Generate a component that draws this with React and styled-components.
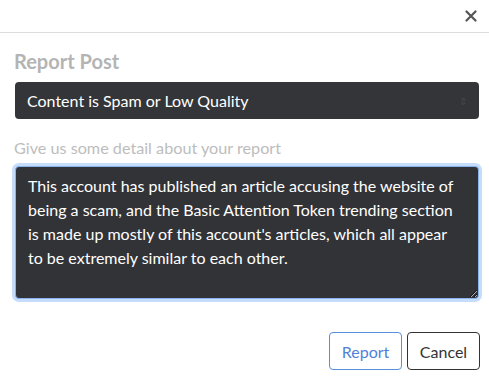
import React from "react";
import styled, { createGlobalStyle } from "styled-components";

const GlobalStyle = createGlobalStyle`
  html, body {
    margin: 0;
    padding: 0;
    background: #fff;
  }
  body {
    font-family: Lato, "Noto Sans", sans-serif;
  }
`;

const Modal = styled.div`
  width: 489px;
  height: 380px;
  background: #fff;
  display: flex;
  flex-direction: column;
`;

const Header = styled.div`
  height: 33px;
  border-bottom: 1px solid #dcdcdc;
  display: flex;
  justify-content: flex-end;
  align-items: center;
  padding-right: 10px;
  box-sizing: border-box;
`;

const CloseButton = styled.button`
  border: none;
  background: none;
  padding: 0;
  width: 16px;
  height: 16px;
  display: flex;
  align-items: center;
  justify-content: center;
  cursor: pointer;
`;

const Body = styled.div`
  padding: 15px 10px 0 14px;
  display: flex;
  flex-direction: column;
`;

const Title = styled.h4`
  margin: 0 0 8px;
  font-size: 20px;
  font-weight: 700;
  color: #b4b4b4;
  line-height: 26px;
`;

const Select = styled.div`
  height: 37px;
  margin-left: 1px;
  background: #343539;
  border-radius: 4px;
  display: flex;
  align-items: center;
  justify-content: space-between;
  padding: 0 12px;
  color: #fff;
  font-size: 16px;
`;

const Arrows = styled.span`
  color: #45464a;
  font-size: 10px;
`;

const Label = styled.label`
  display: block;
  margin: 19px 0 8px;
  font-size: 16.2px;
  color: #bdbdbd;
  line-height: 20px;
`;

const TextArea = styled.textarea`
  box-sizing: border-box;
  margin-left: 1px;
  width: 464px;
  height: 133px;
  background: #323337;
  color: #fff;
  border: 1px solid #8ab4f0;
  border-radius: 4px;
  box-shadow: 0 0 0 3px #c6dcfb;
  padding: 7px 16px 7px 12px;
  font-family: Lato, "Noto Sans", sans-serif;
  font-size: 16px;
  line-height: 24px;
  outline: none;
  resize: vertical;
`;

const Footer = styled.div`
  display: flex;
  justify-content: flex-end;
  gap: 5px;
  padding: 33px 9px 0 0;
`;

const Button = styled.button`
  height: 38px;
  width: 73px;
  padding: 0;
  border-radius: 4px;
  background: #fff;
  font-family: Lato, "Noto Sans", sans-serif;
  font-size: 16px;
  border: 1px solid ${(p) => (p.$primary ? "#5a8fdc" : "#333")};
  color: ${(p) => (p.$primary ? "#4f82d6" : "#333")};
`;

export default function App() {
  return (
    <>
      <GlobalStyle />
      <Modal>
        <Header>
          <CloseButton aria-label="Close">
            <svg width="12" height="12" viewBox="0 0 12 12">
              <path d="M1.5 1.5 L10.5 10.5 M10.5 1.5 L1.5 10.5" stroke="#555" strokeWidth="2.2" strokeLinecap="round" />
            </svg>
          </CloseButton>
        </Header>
        <Body>
          <Title>Report Post</Title>
          <Select>
            <span>Content is Spam or Low Quality</span>
            <Arrows>⇕</Arrows>
          </Select>
          <Label>Give us some detail about your report</Label>
          <TextArea
            defaultValue="This account has published an article accusing the website of being a scam, and the Basic Attention Token trending section is made up mostly of this account's articles, which all appear to be extremely similar to each other."
          />
        </Body>
        <Footer>
          <Button $primary>Report</Button>
          <Button>Cancel</Button>
        </Footer>
      </Modal>
    </>
  );
}
